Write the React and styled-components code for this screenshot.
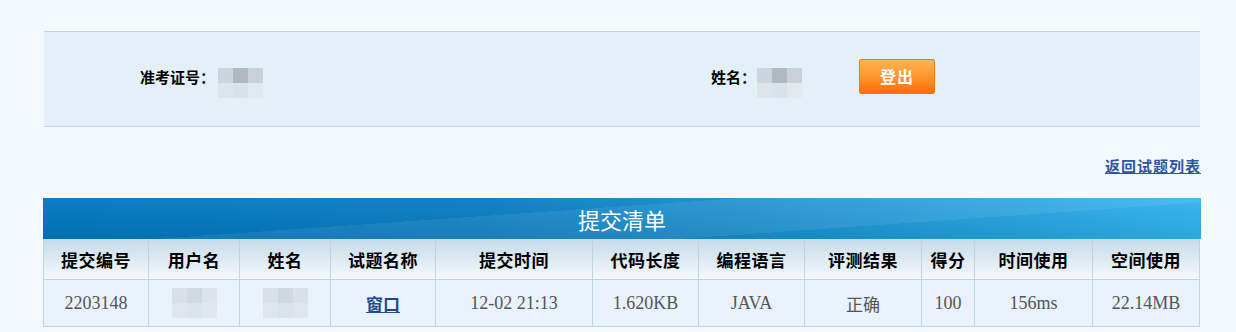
import React from "react";
import styled, { createGlobalStyle } from "styled-components";

const Global = createGlobalStyle`
  html, body { margin: 0; padding: 0; background: #f3fafe; }
  body { font-family: "Noto Sans CJK SC", "Liberation Sans", sans-serif; }
`;

const Page = styled.div`
  width: 1157px;
  margin-left: 43px;
  padding-top: 31px;
`;

const InfoBox = styled.div`
  margin-left: 1px;
  height: 96px;
  box-sizing: border-box;
  background: #e4f0f8;
  border-top: 1px solid #c3d8e2;
  border-bottom: 1px solid #c3d8e2;
  display: flex;
  align-items: center;
  padding: 0 0 6px 96px;
`;

const Field = styled.div`
  display: flex;
  align-items: center;
  width: ${(p) => p.$width || "auto"};
`;

const Label = styled.span`
  font-size: 15px;
  font-weight: 700;
  color: #000;
  letter-spacing: 0;
`;

const Blur = styled.div`
  display: grid;
  grid-template-columns: repeat(3, 15px);
  grid-template-rows: repeat(2, 15px);
  margin-left: ${(p) => p.$gap || "6px"};
  margin-top: ${(p) => p.$top || "14px"};
`;

const BlurCell = styled.div`
  background: ${(p) => p.$c};
`;

const LogoutButton = styled.button`
  margin-left: 57px;
  width: 76px;
  height: 35px;
  border: 1px solid #f07a10;
  border-radius: 2px;
  background: linear-gradient(to bottom, #ffb451 0%, #ff9a30 45%, #ff6e05 100%);
  color: #fff;
  font-family: "Noto Sans CJK SC", sans-serif;
  font-size: 16px;
  font-weight: 700;
  letter-spacing: 1px;
  padding: 0;
  cursor: pointer;
`;

const BackRow = styled.div`
  display: flex;
  justify-content: flex-end;
  margin-top: 29px;
  height: 20px;
  line-height: 20px;
`;

const BackLink = styled.a`
  font-size: 15px;
  font-weight: 700;
  color: #2d55a3;
  text-decoration: underline;
  letter-spacing: 1px;
  margin-right: -1px;
  cursor: pointer;
`;

const TitleBar = styled.div`
  margin-top: 22px;
  height: 41px;
  width: 1158px;
  display: flex;
  align-items: center;
  justify-content: center;
  color: #fff;
  font-size: 22px;
  background:
    linear-gradient(176deg, rgba(255,255,255,0) 0 40%, rgba(255,255,255,0.07) 40% 70%, rgba(0,0,0,0) 70%),
    linear-gradient(to bottom, rgba(255,255,255,0.05), rgba(0,0,0,0.07)),
    linear-gradient(to right, #0077bf 0%, #087dc3 38%, #168dcd 60%, #26a4e1 85%, #31b2ef 100%);
  box-sizing: border-box;
`;

const Table = styled.table`
  border-collapse: collapse;
  table-layout: fixed;
  width: 1157px;
`;

const HeadCell = styled.th`
  height: 40px;
  padding: 0;
  border: 1px solid #bdd6e0;
  border-top: none;
  background: linear-gradient(to bottom, #c5dbea 0%, #dde9f2 50%, #f4f8fb 100%);
  font-size: 17px;
  font-weight: 700;
  color: #000;
  text-align: center;
  letter-spacing: 0.5px;
`;

const DataCell = styled.td`
  height: 46px;
  padding: 0;
  border: 1px solid #bdd6e0;
  background: #e9f2fb;
  text-align: center;
  color: #555;
  font-family: ${(p) => (p.$cjk ? '"Noto Sans CJK SC", sans-serif' : '"Liberation Serif", serif')};
  font-size: ${(p) => (p.$cjk ? "17px" : "18px")};
`;

const CellBlurWrap = styled.div`
  display: flex;
  justify-content: center;
`;

const ProblemLink = styled.a`
  font-family: "Noto Sans CJK SC", sans-serif;
  font-size: 17px;
  font-weight: 700;
  color: #1f4a8c;
  text-decoration: underline;
`;

const infoBlur = ["#cbd5dd", "#b0b8c0", "#c8d0d8", "#dde5eb", "#d8e2ea", "#e1e9ef"];
const rowBlur1 = ["#d8dfe7", "#d0d8e0", "#dce3ea", "#dfe5ed", "#dbe3eb", "#e0e7ef"];
const rowBlur2 = ["#d9e0e8", "#cfd7df", "#d9e0e8", "#dee5ed", "#dae2ea", "#dee5ed"];

const PixelBlock = ({ colors, gap, top }) => (
  <Blur $gap={gap} $top={top}>
    {colors.map((c, i) => (
      <BlurCell key={i} $c={c} />
    ))}
  </Blur>
);

const cols = [105, 91, 91, 105, 157, 106, 106, 117, 53, 118, 107];
const heads = ["提交编号", "用户名", "姓名", "试题名称", "提交时间", "代码长度", "编程语言", "评测结果", "得分", "时间使用", "空间使用"];

export default function App() {
  return (
    <>
      <Global />
      <Page>
        <InfoBox>
          <Field $width="571px">
            <Label>准考证号：</Label>
            <PixelBlock colors={infoBlur} gap="3px" />
          </Field>
          <Field>
            <Label>姓名：</Label>
            <PixelBlock colors={infoBlur} gap="1px" />
            <LogoutButton>登出</LogoutButton>
          </Field>
        </InfoBox>
        <BackRow>
          <BackLink>返回试题列表</BackLink>
        </BackRow>
        <TitleBar>提交清单</TitleBar>
        <Table>
          <colgroup>
            {cols.map((w, i) => (
              <col key={i} style={{ width: w }} />
            ))}
          </colgroup>
          <thead>
            <tr>
              {heads.map((h) => (
                <HeadCell key={h}>{h}</HeadCell>
              ))}
            </tr>
          </thead>
          <tbody>
            <tr>
              <DataCell>2203148</DataCell>
              <DataCell>
                <CellBlurWrap>
                  <PixelBlock colors={rowBlur1} gap="0" top="0" />
                </CellBlurWrap>
              </DataCell>
              <DataCell>
                <CellBlurWrap>
                  <PixelBlock colors={rowBlur2} gap="0" top="0" />
                </CellBlurWrap>
              </DataCell>
              <DataCell>
                <ProblemLink>窗口</ProblemLink>
              </DataCell>
              <DataCell>12-02 21:13</DataCell>
              <DataCell>1.620KB</DataCell>
              <DataCell>JAVA</DataCell>
              <DataCell $cjk>正确</DataCell>
              <DataCell>100</DataCell>
              <DataCell>156ms</DataCell>
              <DataCell>22.14MB</DataCell>
            </tr>
          </tbody>
        </Table>
      </Page>
    </>
  );
}
